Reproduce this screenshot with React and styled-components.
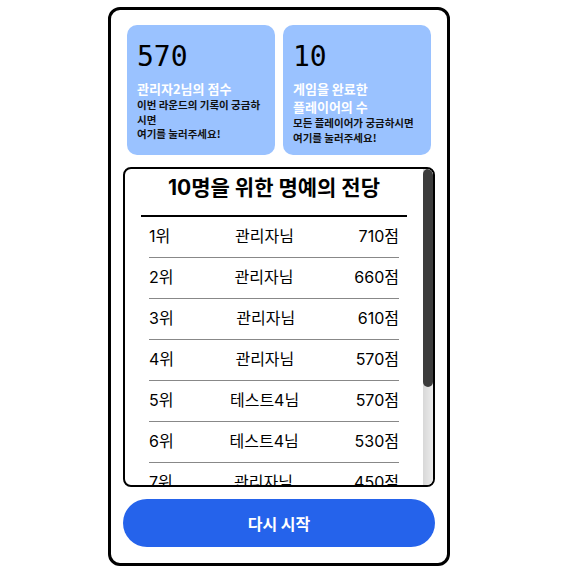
import React from 'react'
import styled, { createGlobalStyle } from "styled-components"

const ranking = [
    { name: '관리자', score: 710 },
    { name: '관리자', score: 660 },
    { name: '관리자', score: 610 },
    { name: '관리자', score: 570 },
    { name: '테스트4', score: 570 },
    { name: '테스트4', score: 530 },
    { name: '관리자', score: 450 },
    { name: '테스트4', score: 420 },
    { name: '관리자', score: 380 },
    { name: '테스트4', score: 310 },
]

function App() {
    return (
        <>
            <GlobalStyle />
            <Panel>
                <Stats>
                    <StatCard>
                        <StatValue>570</StatValue>
                        <StatLabel>관리자2님의 점수</StatLabel>
                        <StatHint>
                            이번 라운드의 기록이 궁금하<br />시면<br />
                            여기를 눌러주세요!
                        </StatHint>
                    </StatCard>
                    <StatCard>
                        <StatValue>10</StatValue>
                        <StatLabel>게임을 완료한<br />플레이어의 수</StatLabel>
                        <StatHint>
                            모든 플레이어가 궁금하시면<br />
                            여기를 눌러주세요!
                        </StatHint>
                    </StatCard>
                </Stats>

                <Board>
                    <BoardScroll>
                        <BoardTitle>10명을 위한 명예의 전당</BoardTitle>
                        { ranking.map((item, index) =>
                            <Row key={index}>
                                <span>{index + 1}위</span>
                                <span>{item.name}님</span>
                                <span>{item.score}점</span>
                            </Row>
                        )}
                    </BoardScroll>
                    {/* headless hides native scrollbars, so draw it */}
                    <ScrollTrack>
                        <ScrollThumb />
                    </ScrollTrack>
                </Board>

                <RestartButton>다시 시작</RestartButton>
            </Panel>
        </>
    )
}

const GlobalStyle = createGlobalStyle`
    body {
        margin: 0;
        background: #fff;
        font-family: Inter, "Noto Sans CJK KR", sans-serif;
        color: #000;
    }
`;

const Panel = styled.div`
    box-sizing: border-box;
    width: 342px;
    margin: 7px 0 20px 108px;
    border: 3px solid #000;
    border-radius: 12px;
    padding: 15px 12px 16px;
    display: flex;
    flex-direction: column;
    gap: 12px;
`;

const Stats = styled.div`
    display: grid;
    grid-template-columns: 1fr 1fr;
    gap: 8px;
    padding: 0 4px;
`;

const StatCard = styled.div`
    background: #9ac2ff;
    border-radius: 10px;
    padding: 15px 10px 10px;
`;

const StatValue = styled.div`
    font-family: "DejaVu Sans Mono", monospace;
    font-size: 28px;
    line-height: 33px;
    margin-bottom: 7px;
`;

const StatLabel = styled.div`
    color: #fff;
    font-family: "Noto Sans CJK KR", sans-serif;
    font-size: 13px;
    font-weight: 700;
    line-height: 18px;
`;

const StatHint = styled.div`
    color: #111;
    font-family: "Noto Sans CJK KR", sans-serif;
    font-size: 10.5px;
    font-weight: 600;
    line-height: 14.5px;
    white-space: nowrap;
`;

const Board = styled.div`
    box-sizing: border-box;
    height: 320px;
    border: 2px solid #000;
    border-radius: 8px;
    overflow: hidden;
    display: flex;
`;

const BoardScroll = styled.div`
    flex: 1;
    overflow-y: auto;
    scrollbar-width: none;

    &::-webkit-scrollbar {
        display: none;
    }
`;

const ScrollTrack = styled.div`
    width: 10px;
    flex-shrink: 0;
    background: linear-gradient(to right, #d8d8d8, #ececec);
`;

const ScrollThumb = styled.div`
    height: 218px;
    background: #3c3c3c;
    border-radius: 5px;
`;

const BoardTitle = styled.h2`
    margin: 0 16px;
    padding: 5px 0 13px;
    border-bottom: 2px solid #000;
    font-size: 21px;
    line-height: 28px;
    font-weight: 700;
    text-align: center;
`;

const Row = styled.div`
    margin: 0 24px;
    display: flex;
    justify-content: space-between;
    padding: 8px 0 10px;
    font-size: 16px;
    font-weight: 400;
    line-height: 22px;
    border-bottom: 1px solid #888;
`;

const RestartButton = styled.button`
    height: 48px;
    border: none;
    border-radius: 24px;
    background: #2563eb;
    color: #fff;
    font-family: "Noto Sans CJK KR", sans-serif;
    font-size: 16px;
    font-weight: 700;
    cursor: pointer;
`;

export default App
